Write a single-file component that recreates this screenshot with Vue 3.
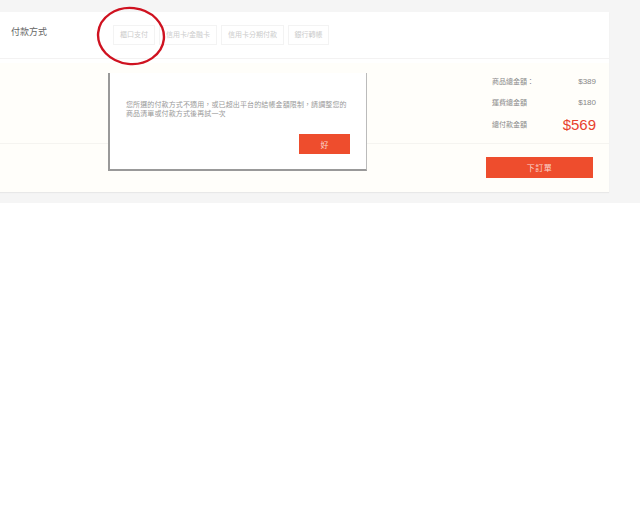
<script setup>
const methods = [
  { name: '櫃口支付', width: 42 },
  { name: '信用卡/金融卡', width: 58 },
  { name: '信用卡分期付款', width: 63 },
  { name: '銀行轉帳', width: 41 }
]
</script>

<template>
  <div class="page">
    <div class="card">
      <div class="payment">
        <div class="payment-label">付款方式</div>
        <div class="methods">
          <div v-for="m in methods" :key="m.name" class="method" :style="{ width: m.width + 'px' }">{{ m.name }}</div>
        </div>
      </div>
      <div class="payment-gap"></div>
      <div class="summary">
        <div class="summary-row first">
          <span class="summary-name">商品總金額：</span>
          <span class="summary-value">$389</span>
        </div>
        <div class="summary-row second">
          <span class="summary-name">運費總金額</span>
          <span class="summary-value">$180</span>
        </div>
        <div class="summary-row total">
          <span class="summary-name">總付款金額</span>
          <span class="total-value">$569</span>
        </div>
      </div>
      <div class="actions">
        <button class="order-btn">下訂單</button>
      </div>
    </div>

    <div class="modal">
      <p class="modal-text">您所選的付款方式不適用，或已超出平台的結帳金額限制，請調整您的商品清單或付款方式後再試一次</p>
      <div class="modal-actions">
        <button class="ok-btn">好</button>
      </div>
    </div>

    <svg class="circle" width="72" height="62" viewBox="0 0 72 62">
      <ellipse cx="35" cy="30" rx="33" ry="28" transform="rotate(6 35 30)" fill="none" stroke="#cf1220" stroke-width="2.4" />
    </svg>
  </div>
</template>

<style scoped>
.page {
  position: relative;
  height: 203px;
  width: 640px;
  padding-top: 12px;
  box-sizing: border-box;
  background: #f5f5f5;
  font-family: "Liberation Sans", "Noto Sans CJK TC", sans-serif;
}
.card {
  width: 609px;
  height: 180px;
  display: flex;
  flex-direction: column;
  background: #fffefa;
  box-shadow: 0 1px 1px rgba(0, 0, 0, 0.05);
}
.payment {
  height: 46px;
  display: flex;
  align-items: flex-start;
  background: #fff;
  border-bottom: 1px solid #f3f2f2;
}
.payment-gap {
  height: 4px;
  background: #fff;
}
.payment-label {
  width: 113px;
  padding: 13px 0 0 11px;
  box-sizing: border-box;
  font-size: 9px;
  line-height: 14px;
  color: #666;
}
.methods {
  display: flex;
  gap: 4px;
  padding-top: 13px;
}
.method {
  height: 20px;
  border: 1px solid #f3f3f3;
  box-sizing: border-box;
  font-size: 7px;
  line-height: 18px;
  text-align: center;
  color: #ccc;
  white-space: nowrap;
}
.summary {
  height: 81px;
  padding: 11px 13px 0 0;
  border-bottom: 1px solid #f5f4f0;
  box-sizing: border-box;
}
.summary-row {
  display: flex;
  align-items: center;
  justify-content: space-between;
  margin-left: 492px;
  color: #888;
}
.summary-row.first {
  height: 14px;
}
.summary-row.second {
  height: 14px;
  margin-top: 7px;
}
.summary-row.total {
  height: 20px;
  margin-top: 5px;
}
.summary-name {
  font-size: 7px;
}
.summary-value {
  font-size: 8px;
  color: #888;
}
.total-value {
  font-size: 15px;
  color: #e8412e;
}
.actions {
  flex: 1;
  display: flex;
  justify-content: flex-end;
  align-items: flex-start;
  padding: 13px 16px 0 0;
}
.order-btn {
  width: 107px;
  height: 21px;
  padding: 0;
  border: 0;
  background: #ee4d2d;
  color: #fbd5cc;
  font: 8px "Liberation Sans", "Noto Sans CJK TC", sans-serif;
  letter-spacing: 0.5px;
}
.modal {
  position: absolute;
  left: 108px;
  top: 73px;
  width: 259px;
  height: 98px;
  box-sizing: border-box;
  padding: 27px 16px 0 16px;
  background: #fff;
  border-left: 2px solid #999;
  border-right: 1px solid #bbb;
  border-bottom: 2px solid #999;
}
.modal-text {
  margin: 0;
  font-size: 7px;
  line-height: 9px;
  letter-spacing: 0.12px;
  color: #999;
}
.modal-actions {
  display: flex;
  justify-content: flex-end;
  margin-top: 16px;
}
.ok-btn {
  width: 51px;
  height: 20px;
  padding: 0;
  border: 0;
  background: #ee4d2d;
  color: #fbd5cc;
  font: 8px "Liberation Sans", "Noto Sans CJK TC", sans-serif;
}
.circle {
  position: absolute;
  left: 96px;
  top: 6px;
}
</style>

<style>
body {
  background: #fff;
}
</style>
